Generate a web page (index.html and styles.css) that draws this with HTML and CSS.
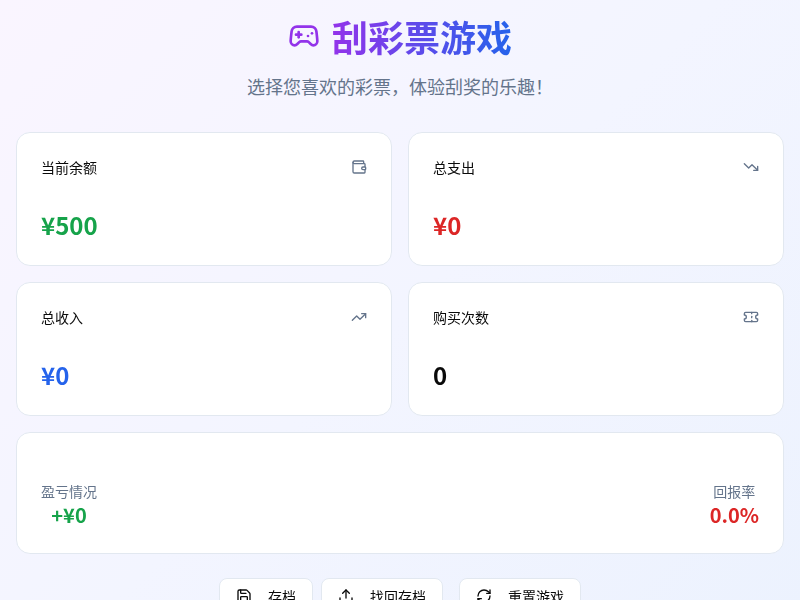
FILE: index.html
```html
<!DOCTYPE html>
<html lang="zh-CN">
<head>
    <meta charset="UTF-8">
    <meta name="viewport" content="width=device-width, initial-scale=1.0">
    <title>刮彩票游戏</title>
    <link rel="stylesheet" href="styles.css">
</head>
<body>
    <div class="container">
        <header class="page-header">
            <h1 class="title">
                <svg class="title-icon" viewBox="0 0 24 24"><line x1="6" x2="10" y1="11" y2="11"/><line x1="8" x2="8" y1="9" y2="13"/><line x1="15" x2="15.01" y1="12" y2="12"/><line x1="18" x2="18.01" y1="10" y2="10"/><path d="M17.32 5H6.68a4 4 0 0 0-3.978 3.59c-.006.052-.01.101-.017.152C2.604 9.416 2 14.456 2 16a3 3 0 0 0 3 3c1 0 1.5-.5 2-1l1.414-1.414A2 2 0 0 1 9.828 16h4.344a2 2 0 0 1 1.414.586L17 18c.5.5 1 1 2 1a3 3 0 0 0 3-3c0-1.545-.604-6.584-.685-7.258-.007-.05-.011-.1-.017-.151A4 4 0 0 0 17.32 5z"/></svg>
                <span class="title-text">刮彩票游戏</span>
            </h1>
            <p class="subtitle">选择您喜欢的彩票，体验刮奖的乐趣！</p>
        </header>

        <div class="stats">
            <div class="card stat">
                <div class="stat-head">
                    <span class="stat-label">当前余额</span>
                    <svg class="stat-icon" viewBox="0 0 24 24"><path d="M19 7V4a1 1 0 0 0-1-1H5a2 2 0 0 0 0 4h15a1 1 0 0 1 1 1v4h-3a2 2 0 0 0 0 4h3a1 1 0 0 0 1-1v-2a1 1 0 0 0-1-1"/><path d="M3 5v14a2 2 0 0 0 2 2h15a1 1 0 0 0 1-1v-4"/></svg>
                </div>
                <div class="stat-value green">¥500</div>
            </div>
            <div class="card stat">
                <div class="stat-head">
                    <span class="stat-label">总支出</span>
                    <svg class="stat-icon" viewBox="0 0 24 24"><polyline points="22 17 13.5 8.5 8.5 13.5 2 7"/><polyline points="16 17 22 17 22 11"/></svg>
                </div>
                <div class="stat-value red">¥0</div>
            </div>
            <div class="card stat">
                <div class="stat-head">
                    <span class="stat-label">总收入</span>
                    <svg class="stat-icon" viewBox="0 0 24 24"><polyline points="22 7 13.5 15.5 8.5 10.5 2 17"/><polyline points="16 7 22 7 22 13"/></svg>
                </div>
                <div class="stat-value blue">¥0</div>
            </div>
            <div class="card stat">
                <div class="stat-head">
                    <span class="stat-label">购买次数</span>
                    <svg class="stat-icon" viewBox="0 0 24 24"><path d="M2 9a3 3 0 0 1 0 6v2a2 2 0 0 0 2 2h16a2 2 0 0 0 2-2v-2a3 3 0 0 1 0-6V7a2 2 0 0 0-2-2H4a2 2 0 0 0-2 2Z"/><path d="M13 5v2"/><path d="M13 17v2"/><path d="M13 11v2"/></svg>
                </div>
                <div class="stat-value">0</div>
            </div>
        </div>

        <div class="card summary">
            <div class="summary-item">
                <div class="summary-label">盈亏情况</div>
                <div class="summary-value green">+¥0</div>
            </div>
            <div class="summary-item">
                <div class="summary-label">回报率</div>
                <div class="summary-value red">0.0%</div>
            </div>
        </div>

        <div class="actions">
            <div class="action-group">
                <button class="btn" type="button">
                    <svg class="btn-icon" viewBox="0 0 24 24"><path d="M15.2 3a2 2 0 0 1 1.4.6l3.8 3.8a2 2 0 0 1 .6 1.4V19a2 2 0 0 1-2 2H5a2 2 0 0 1-2-2V5a2 2 0 0 1 2-2z"/><path d="M17 21v-7a1 1 0 0 0-1-1H8a1 1 0 0 0-1 1v7"/><path d="M7 3v4a1 1 0 0 0 1 1h7"/></svg>
                    存档
                </button>
                <button class="btn" type="button">
                    <svg class="btn-icon" viewBox="0 0 24 24"><path d="M21 15v4a2 2 0 0 1-2 2H5a2 2 0 0 1-2-2v-4"/><polyline points="17 8 12 3 7 8"/><line x1="12" x2="12" y1="3" y2="15"/></svg>
                    找回存档
                </button>
            </div>
            <button class="btn" type="button">
                <svg class="btn-icon" viewBox="0 0 24 24"><path d="M3 12a9 9 0 0 1 9-9 9.75 9.75 0 0 1 6.74 2.74L21 8"/><path d="M21 3v5h-5"/><path d="M21 12a9 9 0 0 1-9 9 9.75 9.75 0 0 1-6.74-2.74L3 16"/><path d="M8 16H3v5"/></svg>
                重置游戏
            </button>
        </div>
    </div>
</body>
</html>
```

FILE: styles.css
```css
* {
    box-sizing: border-box;
}
body {
    margin: 0;
    font-family: "Noto Sans CJK SC", sans-serif;
    color: #0a0a0a;
    background: linear-gradient(135deg, #faf5ff, #f3f5ff 50%, #ecf2fe);
    min-height: 100vh;
}
svg {
    fill: none;
    stroke: currentColor;
    stroke-width: 2;
    stroke-linecap: round;
    stroke-linejoin: round;
    flex-shrink: 0;
}
.container {
    padding: 16px;
}
.page-header {
    text-align: center;
    margin-bottom: 32px;
}
.title {
    display: flex;
    align-items: center;
    justify-content: center;
    gap: 12px;
    margin: 0 0 16px;
    font-size: 36px;
    line-height: 40px;
    font-weight: 700;
}
.title-icon {
    width: 32px;
    height: 32px;
    color: #9333ea;
}
.title-text {
    background: linear-gradient(90deg, #9333ea, #2563eb);
    -webkit-background-clip: text;
    background-clip: text;
    color: transparent;
}
.subtitle {
    margin: 0;
    font-size: 18px;
    line-height: 28px;
    color: #64748b;
}
.stats {
    display: grid;
    grid-template-columns: 1fr 1fr;
    gap: 16px;
    margin-bottom: 16px;
}
.card {
    background: rgba(255, 255, 255, 0.99);
    backdrop-filter: blur(4px);
    border: 1px solid #e2e8f0;
    border-radius: 14px;
}
.stat {
    display: flex;
    flex-direction: column;
    gap: 32px;
    padding: 24px;
}
.stat-head {
    display: flex;
    justify-content: space-between;
    align-items: center;
}
.stat-label {
    font-size: 14px;
    line-height: 20px;
}
.stat-icon {
    width: 16px;
    height: 16px;
    color: #64748b;
}
.stat-value {
    font-size: 24px;
    line-height: 32px;
    font-weight: 700;
}
.green { color: #16a34a; }
.red { color: #dc2626; }
.blue { color: #2563eb; }
.summary {
    display: flex;
    justify-content: space-between;
    padding: 48px 24px 24px;
    text-align: center;
}
.summary-label {
    font-size: 14px;
    line-height: 20px;
    color: #64748b;
}
.summary-value {
    font-size: 20px;
    line-height: 28px;
    font-weight: 700;
}
.actions {
    display: flex;
    justify-content: center;
    gap: 16px;
    margin-top: 24px;
}
.action-group {
    display: flex;
    gap: 8px;
}
.btn {
    display: flex;
    align-items: center;
    gap: 16px;
    height: 36px;
    padding: 0 16px;
    background: rgba(255, 255, 255, 0.99);
    backdrop-filter: blur(4px);
    border: 1px solid #e2e8f0;
    border-radius: 8px;
    font-family: inherit;
    font-size: 14px;
    font-weight: 400;
    color: #0a0a0a;
}
.btn-icon {
    width: 16px;
    height: 16px;
}
```
